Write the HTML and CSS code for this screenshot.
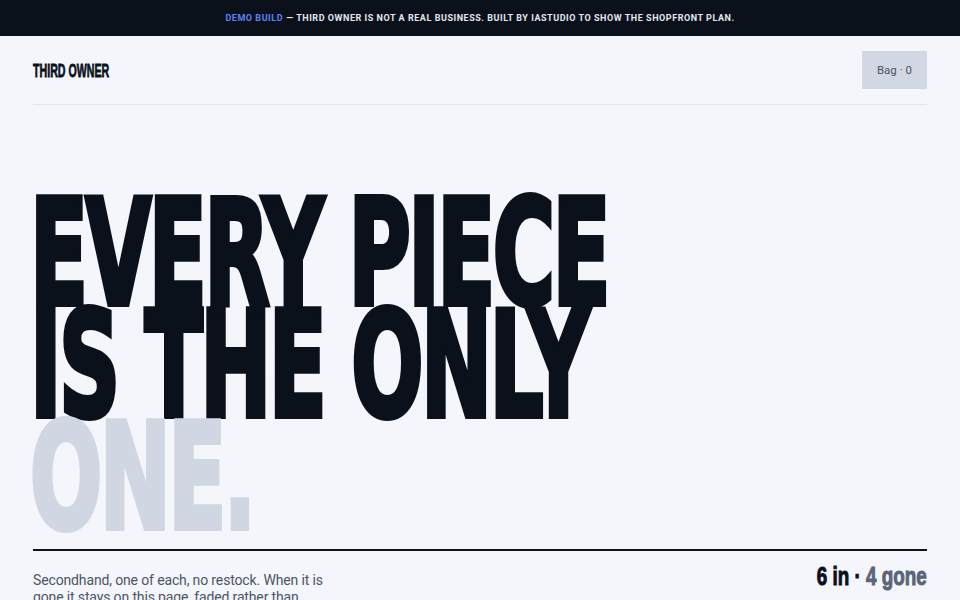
FILE: index.html
```html
<!DOCTYPE html>
<html lang="en">
<head>
<meta charset="utf-8">
<title>Third Owner</title>
<link rel="stylesheet" href="styles.css">
</head>
<body>
<div class="banner"><span class="banner-accent">DEMO BUILD</span> — THIRD OWNER IS NOT A REAL BUSINESS. BUILT BY IASTUDIO TO SHOW THE SHOPFRONT PLAN.</div>
<div class="page">
  <header class="top">
    <div class="logo"><span class="logo-text">THIRD OWNER</span></div>
    <button class="bag" type="button">Bag · 0</button>
  </header>
  <section class="hero">
    <h1 class="headline">
      <span class="line">EVERY PIECE</span>
      <span class="line">IS THE ONLY</span>
      <span class="line line-muted">ONE.</span>
    </h1>
    <hr class="rule">
    <div class="meta">
      <p class="intro">Secondhand, one of each, no restock. When it is gone it stays on this page, faded rather than removed, so you can see what already went.</p>
      <div class="stat"><span class="stat-text">6 in · <span class="stat-gone">4 gone</span></span></div>
    </div>
  </section>
</div>
</body>
</html>
```
FILE: styles.css
```css
html {
  overflow-x: hidden;
  scrollbar-width: none;
}
html::-webkit-scrollbar {
  display: none;
}
body {
  margin: 0;
  background: #f4f6fb;
  color: #0b111b;
  font-family: Roboto, "Liberation Sans", sans-serif;
}
.banner {
  height: 36px;
  background: #0b111b;
  color: #e3e7ee;
  font-family: Roboto, "Liberation Sans", sans-serif;
  font-weight: 700;
  font-size: 9px;
  letter-spacing: 0.06em;
  display: flex;
  align-items: center;
  justify-content: center;
  white-space: nowrap;
}
.banner-accent {
  color: #5f82f5;
  margin-right: 0.35em;
}
.page {
  padding: 0 33px;
}
.top {
  display: flex;
  justify-content: space-between;
  align-items: center;
  padding: 15px 0;
  border-bottom: 1px solid #e1e5ec;
}
.logo {
  font-family: "Liberation Sans", Arial, sans-serif;
  font-weight: 700;
  font-size: 19px;
  line-height: 1;
  white-space: nowrap;
}
.logo-text {
  display: inline-block;
  -webkit-text-stroke: 0.8px #0b111b;
  transform: scaleX(0.56);
  transform-origin: 0 50%;
}
.bag {
  height: 38px;
  padding: 0 15px;
  border: 0;
  background: #d2d8e3;
  color: #4a5467;
  font-family: Roboto, "Liberation Sans", sans-serif;
  font-size: 11.5px;
  cursor: pointer;
}
.hero {
  padding-top: 93px;
}
.headline {
  margin: 0;
  font-family: "DejaVu Sans", "Liberation Sans", sans-serif;
  font-weight: 700;
  font-size: 147px;
  line-height: 112px;
  letter-spacing: -0.03em;
  color: #0b111b;
  -webkit-text-stroke-width: 6px;
}
.line {
  display: block;
  white-space: nowrap;
  margin-left: -3px;
  transform: scaleX(0.578);
  transform-origin: 0 0;
}
.line-muted {
  color: #d0d6e2;
}
.rule {
  margin: 15px 0 0;
  height: 2px;
  border: 0;
  background: #0b111b;
}
.meta {
  display: flex;
  justify-content: space-between;
  align-items: baseline;
  padding-top: 12px;
}
.intro {
  margin: 0;
  width: 300px;
  font-size: 14px;
  line-height: 17px;
  letter-spacing: -0.01em;
  color: #4b5566;
}
.stat {
  font-family: "Liberation Sans", Arial, sans-serif;
  font-weight: 700;
  font-size: 26.5px;
  line-height: 1;
  white-space: nowrap;
}
.stat-text {
  display: inline-block;
  -webkit-text-stroke-width: 1px;
  transform: scaleX(0.71);
  transform-origin: 100% 50%;
}
.stat-gone {
  color: #5b6478;
}
```
